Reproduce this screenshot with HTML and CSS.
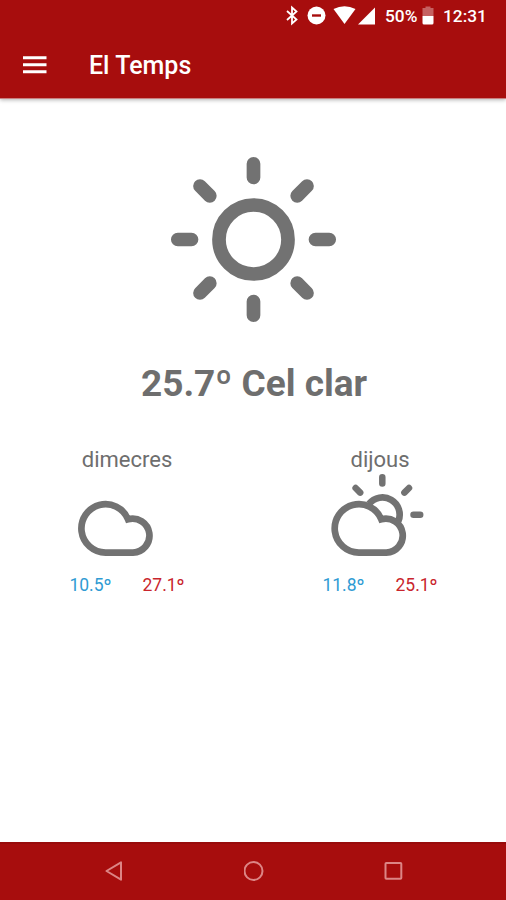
FILE: index.html
```html
<!DOCTYPE html>
<html lang="ca">
<head>
  <meta charset="UTF-8" />
  <meta name="viewport" content="width=device-width, initial-scale=1.0" />
  <title>El Temps</title>
  <link rel="stylesheet" href="styles.css">
</head>
<body>
  <header>
    <div class="status">
      <svg class="status-icons" width="108" height="32" viewBox="270 0 108 32">
        <path class="bluetooth" d="M287 11 L296.500 19.500 L292 23.500 V7.500 L296.500 11.500 L287 20" />
        <circle cx="316.5" cy="15.5" r="9" />
        <path class="minus" d="M312 15.5 H321" />
        <path d="M333.5 9 Q344.500 3.500 355.500 9 L344.500 24 Z" />
        <path d="M375 7.500 V24.500 H358 Z" />
      </svg>
      <span class="percent">50%</span>
      <svg class="battery" width="12" height="20" viewBox="0 0 12 20">
        <path class="empty" d="M3.500 0.500 H8.500 V2 H11.500 V10 H0.500 V2 H3.500 Z" />
        <path d="M0.500 10 H11.500 V17 Q11.500 18.500 10 18.500 H2 Q0.500 18.500 0.500 17 Z" />
      </svg>
      <span class="clock">12:31</span>
    </div>
    <div class="toolbar">
      <svg class="menu" width="24" height="18" viewBox="0 0 24 18">
        <path d="M0 1.700 H23.500 M0 8.700 H23.500 M0 15.700 H23.500" />
      </svg>
      <h1>El Temps</h1>
    </div>
  </header>

  <main>
    <svg class="sun" width="168" height="168" viewBox="-84.500 -83.500 168 168">
      <circle r="34.500" />
      <path d="M0 -62 V-75.700 M0 62 V75.700 M-62 0 H-75.700 M62 0 H75.700" />
      <path d="M43.700 -43.700 L53.500 -53.500 M43.700 43.700 L53.500 53.500 M-43.700 43.700 L-53.500 53.500 M-43.700 -43.700 L-53.500 -53.500" />
    </svg>
    <h2>25.7º Cel clar</h2>

    <div class="forecast">
      <div class="day">
        <p class="name">dimecres</p>
        <svg class="icon" width="110" height="86" viewBox="72 473 110 86">
          <path d="M105.600 552.600 A24.200 24.200 0 1 1 128 519.200 A17 17 0 1 1 133 552.600 Z" />
        </svg>
        <div class="temps">
          <span class="min">10.5º</span>
          <span class="max">27.1º</span>
        </div>
      </div>
      <div class="day">
        <p class="name">dijous</p>
        <svg class="icon" width="110" height="86" viewBox="325 473 110 86">
          <path d="M358.900 552.600 A24.200 24.200 0 1 1 381.300 519.200 A17 17 0 1 1 386.300 552.600 Z" />
          <path d="M369 503.900 A17.200 17.200 0 0 1 398.300 521.300" />
          <path class="rays" d="M382.300 483.500 V477.200 M413.500 514.700 H420.200 M404.400 492.600 L409 488 M360.200 492.600 L355.600 488" />
        </svg>
        <div class="temps">
          <span class="min">11.8º</span>
          <span class="max">25.1º</span>
        </div>
      </div>
    </div>
  </main>

  <footer>
    <svg width="20" height="20" viewBox="0 0 20 20"><path d="M17 1.300 V18.700 L2.500 10 Z" /></svg>
    <svg width="20" height="20" viewBox="0 0 20 20"><circle cx="9.500" cy="10" r="9" /></svg>
    <svg width="20" height="20" viewBox="0 0 20 20"><rect x="1.500" y="2" width="15.800" height="15.800" rx="0.800" /></svg>
  </footer>
</body>
</html>
```
FILE: styles.css
```css
body {
  margin: 0;
  height: 900px;
  display: flex;
  flex-direction: column;
  background-color: #fff;
  color: #6e6e6e;
  font-family: Roboto, "Liberation Sans", sans-serif;
}

h1,
h2,
p {
  margin: 0;
}

svg {
  display: block;
}

header {
  height: 98px;
  background-color: #a70d0d;
  color: #fff;
  border-bottom: 1px solid #c98080;
  box-shadow: 0 1px 4px rgba(0, 0, 0, 0.3);
}

.status {
  display: flex;
  align-items: center;
  height: 32px;
  padding-left: 270px;
  font-size: 17.3px;
  font-weight: 500;
  line-height: 32px;
}

.status svg {
  fill: #fff;
}

.status .bluetooth {
  fill: none;
  stroke: #fff;
  stroke-width: 1.8;
}

.status .minus {
  stroke: #a70d0d;
  stroke-width: 2.4;
}

.percent {
  width: 37px;
  margin-left: 7px;
}

.battery .empty {
  opacity: 0.35;
}

.clock {
  margin-left: 9px;
}

.toolbar {
  display: flex;
  align-items: center;
  height: 66px;
  padding-left: 23px;
}

.menu {
  stroke: #fff;
  stroke-width: 3;
}

h1 {
  margin-left: 42px;
  padding-top: 2px;
  font-size: 25px;
  font-weight: 500;
  line-height: 32px;
}

main {
  flex: 1;
  display: flex;
  flex-direction: column;
  align-items: center;
}

.sun {
  margin-top: 57px;
  fill: none;
  stroke: #727272;
  stroke-width: 13.7;
  stroke-linecap: round;
}

h2 {
  margin-top: 38px;
  padding-left: 2px;
  font-size: 37px;
  font-weight: 700;
  line-height: 44px;
}

.forecast {
  display: flex;
  width: 100%;
  margin-top: 40px;
}

.day {
  width: 253px;
}

.name {
  padding: 1px 0 0 1px;
  text-align: center;
  font-size: 22px;
  line-height: 26px;
}

.icon {
  margin-left: 72px;
  fill: none;
  stroke: #727272;
  stroke-width: 6.7;
}

.rays {
  stroke-width: 6.5;
  stroke-linecap: round;
}

.temps {
  display: flex;
  justify-content: center;
  gap: 31px;
  margin-top: 14px;
  padding-left: 1px;
  font-size: 17.5px;
  line-height: 24px;
}

.min {
  color: #2f9bd3;
}

.max {
  color: #c9252d;
}

footer {
  display: flex;
  justify-content: center;
  gap: 120px;
  height: 39px;
  padding: 17px 0 0 1px;
  border-top: 2px solid #980b0b;
  background-color: #a70d0d;
}

footer svg {
  fill: none;
  stroke: #dc8585;
  stroke-width: 2;
  stroke-linejoin: round;
}
```
